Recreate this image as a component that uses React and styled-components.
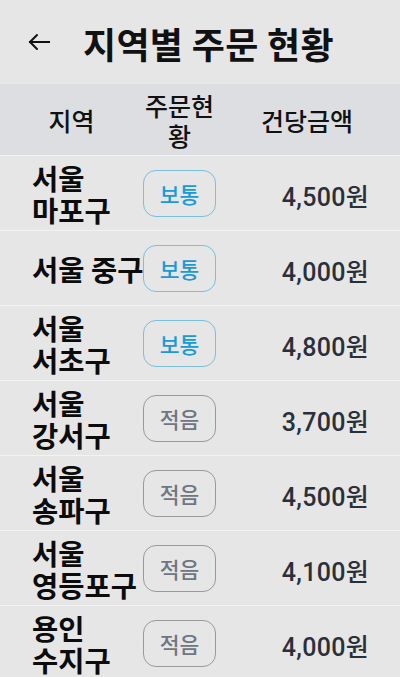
import React from "react";
import styled, { createGlobalStyle } from "styled-components";

const Global = createGlobalStyle`
  html, body { margin: 0; padding: 0; background: #e6e6e6; }
  body { font-family: Roboto, "Noto Sans CJK KR", sans-serif; -webkit-font-smoothing: antialiased; }
  * { box-sizing: border-box; }
`;

const Page = styled.div`
  width: 400px;
  min-height: 677px;
  background: #e6e6e6;
  overflow: hidden;
`;

const TitleBar = styled.div`
  height: 83px;
  display: flex;
  align-items: center;
  padding-left: 27px;
  gap: 32px;
`;

const BackButton = styled.button`
  border: 0;
  background: none;
  padding: 0;
  width: 24px;
  height: 24px;
  display: flex;
  align-items: center;
  justify-content: center;
  color: #111;
`;

const Title = styled.h1`
  margin: 0;
  font-family: "Noto Sans CJK KR", sans-serif;
  font-size: 36px;
  font-weight: 700;
  color: #111;
  letter-spacing: 0.3px;
  position: relative;
  top: 1px;
`;

const Grid = styled.div`
  display: grid;
  grid-template-columns: 143px 73px 1fr;
  align-items: center;
`;

const HeaderRow = styled(Grid)`
  background: #dcdee1;
  height: 72px;
  border-top: 1px solid #e9e9e9;
`;

const HeadCell = styled.div`
  text-align: center;
  font-family: "Noto Sans CJK KR", sans-serif;
  font-size: 25px;
  font-weight: 500;
  line-height: 30px;
  color: #111;
  padding-right: ${(p) => p.$pr || 0}px;
`;

const Row = styled(Grid)`
  height: 75px;
  border-top: 1px solid #f3f3f3;
`;

const Region = styled.div`
  padding-left: 32px;
  margin-right: -8px;
  font-family: "Noto Sans CJK KR", sans-serif;
  font-size: 28.5px;
  font-weight: 700;
  line-height: 32px;
  color: #0c0c0c;
  word-break: keep-all;
  position: relative;
  top: 1px;
`;

const BadgeCell = styled.div`
  display: flex;
  justify-content: center;
`;

const Badge = styled.span`
  width: 73px;
  height: 47px;
  border-radius: 13px;
  border: 1px solid ${(p) => (p.$level === "보통" ? "#78bfe0" : "#9a9a9a")};
  color: ${(p) => (p.$level === "보통" ? "#1a9ad6" : "#6e7681")};
  display: flex;
  align-items: center;
  justify-content: center;
  font-family: "Noto Sans CJK KR", sans-serif;
  font-size: 21.5px;
  font-weight: 500;
`;

const Amount = styled.div`
  text-align: right;
  padding-right: 31px;
  font-size: 25px;
  font-weight: 500;
  color: #2a303a;
  letter-spacing: 0.3px;
  position: relative;
  top: 2px;
`;

const rows = [
  ["서울 마포구", "보통", "4,500원"],
  ["서울 중구", "보통", "4,000원"],
  ["서울 서초구", "보통", "4,800원"],
  ["서울 강서구", "적음", "3,700원"],
  ["서울 송파구", "적음", "4,500원"],
  ["서울 영등포구", "적음", "4,100원"],
  ["용인 수지구", "적음", "4,000원"],
];

export default function App() {
  return (
    <Page>
      <Global />
      <TitleBar>
        <BackButton aria-label="back">
          <svg width="24" height="24" viewBox="0 0 24 24" fill="none" stroke="currentColor" strokeWidth="2" strokeLinecap="square">
            <path d="M22 12H3" />
            <path d="M10 5l-7 7 7 7" strokeLinejoin="miter" strokeLinecap="round" />
          </svg>
        </BackButton>
        <Title>지역별 주문 현황</Title>
      </TitleBar>
      <HeaderRow>
        <HeadCell>지역</HeadCell>
        <HeadCell>주문현황</HeadCell>
        <HeadCell $pr={2}>건당금액</HeadCell>
      </HeaderRow>
      {rows.map(([region, level, amount], i) => (
        <Row key={i}>
          <Region>{region}</Region>
          <BadgeCell>
            <Badge $level={level}>{level}</Badge>
          </BadgeCell>
          <Amount>{amount}</Amount>
        </Row>
      ))}
    </Page>
  );
}
